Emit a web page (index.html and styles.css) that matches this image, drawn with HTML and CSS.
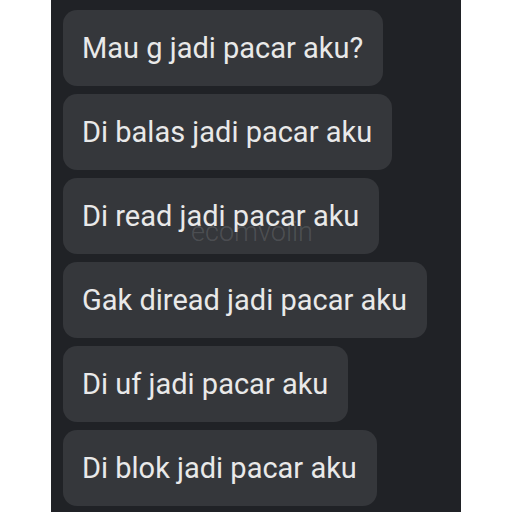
FILE: index.html
```html
<!DOCTYPE html>
<html lang="id">
  <head>
    <meta charset="UTF-8" />
    <meta name="viewport" content="width=device-width, initial-scale=1.0" />
    <title>Chat</title>
    <link rel="stylesheet" href="styles.css">
  </head>

  <body>
    <div class="chat">
      <ul class="chat_list">
        <li class="bubble">Mau g jadi pacar aku?</li>
        <li class="bubble">Di balas jadi pacar aku</li>
        <li class="bubble">Di read jadi pacar aku</li>
        <li class="bubble">Gak diread jadi pacar aku</li>
        <li class="bubble">Di uf jadi pacar aku</li>
        <li class="bubble">Di blok jadi pacar aku</li>
      </ul>
      <div class="watermark">ecomvolin</div>
    </div>
  </body>
</html>
```

FILE: styles.css
```css
* {
  margin: 0;
  padding: 0;
  box-sizing: border-box;
}

li {
  list-style-type: none;
}

body {
  background-color: #fff;
  font-family: Roboto, "Liberation Sans", sans-serif;
}

.chat {
  position: relative;
  width: 410px;
  height: 512px;
  margin-left: 51px;
  padding: 10px 0 0 12px;
  background-color: #202226;
  overflow: hidden;
}

.chat_list {
  display: flex;
  flex-direction: column;
  align-items: flex-start;
  gap: 8px;
}

.bubble {
  height: 76px;
  line-height: 76px;
  padding: 0 20px 0 19px;
  border-radius: 14px;
  background-color: #35373b;
  color: #e9e9e9;
  font-size: 29px;
  white-space: nowrap;
}

.watermark {
  position: absolute;
  left: 140px;
  top: 216px;
  color: rgba(200, 200, 200, 0.18);
  font-size: 27px;
  font-weight: 300;
}
```
